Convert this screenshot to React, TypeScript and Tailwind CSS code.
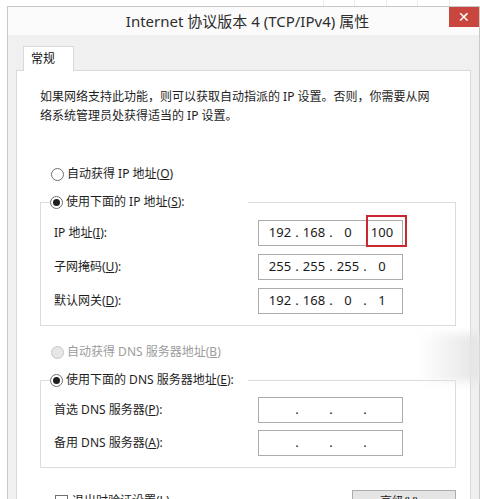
import { Fragment } from "react";

// a Win8 style radio dot
const Radio = ({ checked, disabled }: { checked?: boolean; disabled?: boolean }) => (
  <span
    className={`flex h-[13px] w-[13px] shrink-0 items-center justify-center rounded-full border ${
      disabled ? "border-[#c6c6c6] bg-[#e6e6e6]" : "border-[#707070] bg-white"
    }`}
  >
    {checked && <span className="h-[7px] w-[7px] rounded-full bg-[#1f1f1f]" />}
  </span>
);

const IpBox = ({ parts, highlight }: { parts: string[]; highlight?: boolean }) => (
  <div className="relative flex h-[26px] w-[145px] items-center border border-[#ababab] bg-white pl-[7px] text-[13px] text-[#1a1a1a]">
    {parts.map((p, i) => (
      <Fragment key={i}>
        <span className="w-[28px] text-center">{p}</span>
        {i < 3 && <span className="w-[6px] text-center">{highlight && i === 2 ? "" : "."}</span>}
      </Fragment>
    ))}
    {highlight && (
      <div className="absolute left-[107px] top-[-6px] h-[32px] w-[41px] border-2 border-[#c8282e]" />
    )}
  </div>
);

const Row = ({ label, parts, highlight }: { label: React.ReactNode; parts: string[]; highlight?: boolean }) => (
  <div className="grid grid-cols-[204px_145px] items-center">
    <span>{label}</span>
    <IpBox parts={parts} highlight={highlight} />
  </div>
);

const App = () => {
  return (
    <div className="h-[499px] w-[480px] overflow-hidden bg-white font-['Noto_Sans','Noto_Sans_CJK_SC',sans-serif] text-[12px] text-[#1e1e1e]">
      {/* window behind */}
      <div className="flex h-[6px] pl-[323px]">
        {[0, 1, 2, 3, 4].map((i) => (
          <span key={i} className="h-full w-[32px] border-l border-[#ececec]" />
        ))}
      </div>

      <div className="relative ml-[7px] w-[473px] border border-[#c9c9c9] bg-[#f0f0f0]">
        {/* title bar */}
        <div className="relative flex h-[28px] items-center justify-center bg-[#fbfbfb] pl-[8px] text-[15px] text-[#2e2e2e]">
          Internet 协议版本 4 (TCP/IPv4) 属性
          <div className="absolute right-0 top-0 flex h-[20px] w-[30px] items-center justify-center bg-[#c9463f] text-[14px] leading-none text-white">
            ✕
          </div>
        </div>

        <div className="px-[8px] pt-[11px]">
          {/* tab */}
          <div className="flex">
            <div className="ml-[7px] h-[25px] w-[51px] border border-b-0 border-[#d9d9d9] bg-white pl-[7px] leading-[24px] text-[#111]">
              常规
            </div>
          </div>

          {/* page */}
          <div className="-mt-px h-[440px] border border-[#d9d9d9] bg-white pl-[23px] pr-[14px] pt-[16px]">
            <p className="whitespace-nowrap leading-[19px]">
              如果网络支持此功能，则可以获取自动指派的 IP 设置。否则，你需要从网
              <br />
              络系统管理员处获得适当的 IP 设置。
            </p>

            <div className="ml-[11px] mt-[39px] flex h-[20px] items-center gap-[3px]">
              <Radio />
              <span>
                自动获得 IP 地址(<u>O</u>)
              </span>
            </div>

            <fieldset className="mt-[8px] border border-[#dcdcdc] px-0">
              <legend className="ml-[9px] flex h-[20px] w-[198px] items-center gap-[3px] bg-white">
                <Radio checked />
                <span>
                  使用下面的 IP 地址(<u>S</u>):
                </span>
              </legend>
              <div className="flex flex-col gap-[8px] pb-[11px] pl-[13px] pt-[8px]">
                <Row label={<>IP 地址(<u>I</u>):</>} parts={["192", "168", "0", "100"]} highlight />
                <Row label={<>子网掩码(<u>U</u>):</>} parts={["255", "255", "255", "0"]} />
                <Row label={<>默认网关(<u>D</u>):</>} parts={["192", "168", "0", "1"]} />
              </div>
            </fieldset>

            <div className="ml-[11px] mt-[16px] flex h-[20px] items-center gap-[3px] text-[#9c9c9c]">
              <Radio disabled />
              <span>
                自动获得 DNS 服务器地址(<u>B</u>)
              </span>
            </div>

            <fieldset className="mt-[8px] border border-[#dcdcdc] px-0">
              <legend className="ml-[9px] flex h-[20px] w-[198px] items-center gap-[3px] bg-white">
                <Radio checked />
                <span>
                  使用下面的 DNS 服务器地址(<u>E</u>):
                </span>
              </legend>
              <div className="flex flex-col gap-[7px] pb-[11px] pl-[13px] pt-[7px]">
                <Row label={<>首选 DNS 服务器(<u>P</u>):</>} parts={["", "", "", ""]} />
                <Row label={<>备用 DNS 服务器(<u>A</u>):</>} parts={["", "", "", ""]} />
              </div>
            </fieldset>

            <div className="mt-[22px] flex items-start justify-between">
              <div className="ml-[15px] mt-[2px] flex items-center gap-[4px]">
                <span className="h-[13px] w-[13px] border border-[#707070] bg-white" />
                <span>
                  退出时验证设置(<u>L</u>)
                </span>
              </div>
              <div className="flex h-[23px] w-[104px] items-center justify-center border border-[#adadad] bg-[#e5e5e5]">
                高级(<u>V</u>)...
              </div>
            </div>
          </div>
        </div>

        {/* smudge on the right of the page */}
        <div className="pointer-events-none absolute left-[410px] top-[327px] h-[48px] w-[62px] bg-linear-to-r from-transparent to-[#e4e4e4] blur-[4px]" />
      </div>
    </div>
  );
};

export default App;
